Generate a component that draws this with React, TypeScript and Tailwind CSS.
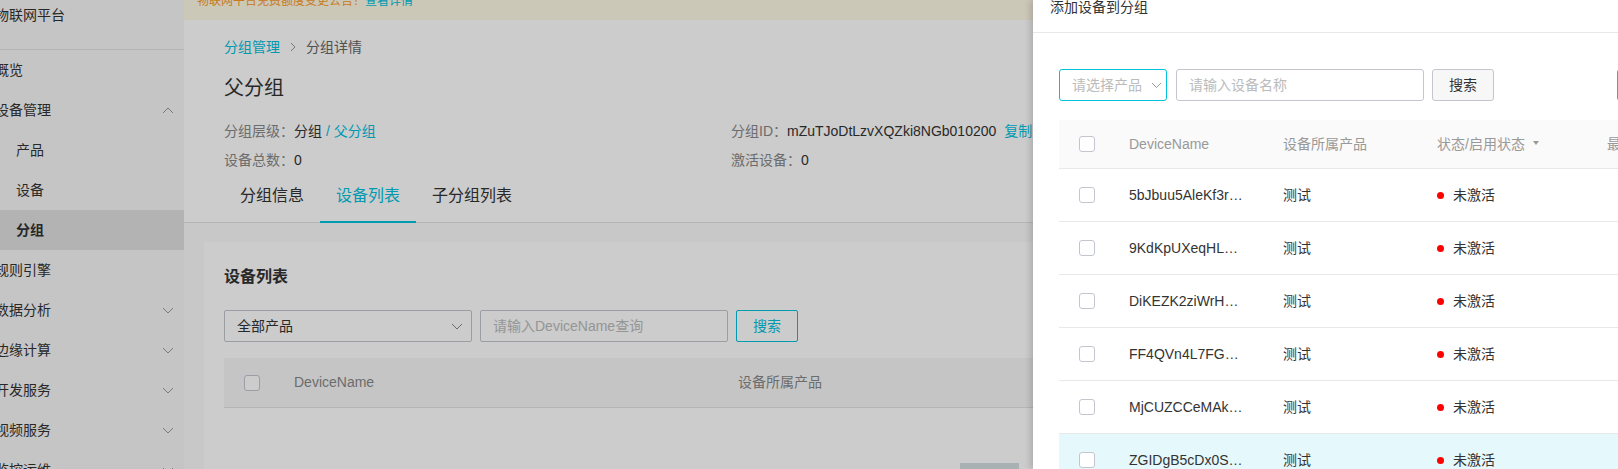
import React from "react";

const Chevron = ({ dir = "down", className = "" }: { dir?: "down" | "up" | "right"; className?: string }) => {
  const pts =
    dir === "down" ? "1,1 6,6 11,1" : dir === "up" ? "1,6 6,1 11,6" : "1,1 5,5 1,9";
  const w = dir === "right" ? 6 : 12;
  const h = dir === "right" ? 10 : 7;
  return (
    <svg width={w} height={h} viewBox={`0 0 ${w} ${h}`} className={className} fill="none">
      <polyline points={pts} stroke="currentColor" strokeWidth="1" />
    </svg>
  );
};

const Checkbox = () => (
  <span className="block w-[16px] h-[16px] rounded-[3px] border border-[#c4c6cf] bg-white" />
);

const menu = [
  { label: "概览" },
  { label: "设备管理", arrow: "up" as const, children: ["产品", "设备", "分组"] },
  { label: "规则引擎" },
  { label: "数据分析", arrow: "down" as const },
  { label: "边缘计算", arrow: "down" as const },
  { label: "开发服务", arrow: "down" as const },
  { label: "视频服务", arrow: "down" as const },
  { label: "监控运维", arrow: "down" as const },
];

const devices = [
  "5bJbuu5AleKf3r…",
  "9KdKpUXeqHL…",
  "DiKEZK2ziWrH…",
  "FF4QVn4L7FG…",
  "MjCUZCCeMAk…",
  "ZGIDgB5cDx0S…",
];

const Sidebar = () => (
  <aside className="w-[184px] shrink-0 h-full bg-[#f7f7f7] overflow-hidden text-[14px] text-[#333]">
    <div className="h-[50px] border-b border-[#e2e2e2] -ml-[5px]">
      <div className="leading-[30px] whitespace-nowrap">物联网平台</div>
    </div>
    <nav className="-ml-[5px] w-[189px]">
      {menu.map((m) => (
        <div key={m.label}>
          <div className="h-[40px] flex items-center justify-between pr-[10px]">
            <span className="whitespace-nowrap">{m.label}</span>
            {m.arrow && <Chevron dir={m.arrow} className="text-[#999]" />}
          </div>
          {m.children?.map((c) => (
            <div
              key={c}
              className={`h-[40px] flex items-center pl-[21px] ${
                c === "分组" ? "bg-[#e0e0e0] font-bold" : ""
              }`}
            >
              {c}
            </div>
          ))}
        </div>
      ))}
    </nav>
  </aside>
);

const Main = () => (
  <main className="flex-1 h-full flex flex-col overflow-hidden bg-[#fafafa] text-[14px] text-[#333]">
    <div className="h-[20px] shrink-0 bg-[#fffbe6] overflow-hidden pl-[13px]">
      <div className="text-[12px] leading-[14px] -mt-[6px] text-[#fa9a28] whitespace-nowrap">
        物联网平台免费额度变更公告！<span className="text-[#00c1de]">查看详情</span>
      </div>
    </div>

    <div className="bg-white pl-[40px]">
      <div className="mt-[17px] flex items-center leading-[20px]">
        <span className="text-[#00c1de]">分组管理</span>
        <Chevron dir="right" className="mx-[10px] text-[#999]" />
        <span className="text-[#666]">分组详情</span>
      </div>
      <h1 className="mt-[17px] text-[20px] leading-[28px] text-[#333]">父分组</h1>
      <div className="mt-[19px] grid grid-cols-[507px_1fr] gap-y-[9px] leading-[20px] whitespace-nowrap">
        <div>
          <span className="text-[#888]">分组层级：</span>分组
          <span className="text-[#00c1de]"> / 父分组</span>
        </div>
        <div>
          <span className="text-[#888]">分组ID：</span>mZuTJoDtLzvXQZki8NGb010200
          <span className="ml-[8px] text-[#00c1de]">复制</span>
        </div>
        <div>
          <span className="text-[#888]">设备总数：</span>0
        </div>
        <div>
          <span className="text-[#888]">激活设备：</span>0
        </div>
      </div>
      <div className="-ml-[40px] pl-[40px] border-b border-[#e3e3e3] flex text-[16px] leading-[20px]">
        {["分组信息", "设备列表", "子分组列表"].map((t) => (
          <div
            key={t}
            className={`px-[16px] pt-[16px] pb-[15px] border-b-2 -mb-px ${
              t === "设备列表" ? "border-[#00c1de] text-[#00c1de]" : "border-transparent"
            }`}
          >
            {t}
          </div>
        ))}
      </div>
    </div>

    <div className="flex-1 px-[20px] pt-[19px]">
      <div className="bg-white h-full px-[20px] pt-[23px]">
        <h2 className="text-[16px] font-bold leading-[24px]">设备列表</h2>
        <div className="mt-[21px] flex h-[32px]">
          <div className="w-[248px] shrink-0 border border-[#c4c6cf] rounded-[2px] flex items-center justify-between pl-[12px] pr-[8px]">
            <span>全部产品</span>
            <Chevron className="text-[#888]" />
          </div>
          <div className="ml-[8px] w-[248px] shrink-0 border border-[#c4c6cf] rounded-[2px] flex items-center pl-[12px] text-[#bbb]">
            请输入DeviceName查询
          </div>
          <div className="ml-[8px] w-[62px] shrink-0 border border-[#00c1de] rounded-[2px] flex items-center justify-center text-[#00c1de]">
            搜索
          </div>
        </div>
        <div className="mt-[16px] h-[50px] bg-[#f7f7f7] border-b border-[#e3e3e3] flex items-center text-[#888] w-[1200px]">
          <div className="w-[54px] shrink-0 pl-[20px]">
            <Checkbox />
          </div>
          <div className="w-[444px] shrink-0 px-[16px]">DeviceName</div>
          <div className="px-[16px]">设备所属产品</div>
        </div>
        <div className="mt-[55px] ml-[736px] w-[59px] h-[30px] bg-[#d3dee2]" />
      </div>
    </div>
  </main>
);

const Drawer = () => (
  <div className="absolute top-0 bottom-0 left-[1033px] w-[620px] bg-white z-20 shadow-[-3px_0_6px_rgba(0,0,0,0.15)] text-[14px] text-[#333] overflow-hidden">
    <div className="h-[33px] border-b border-[#e8e8e8] pl-[17px]">
      <div className="leading-[14px]">添加设备到分组</div>
    </div>
    <div className="pl-[26px]">
      <div className="mt-[36px] flex h-[32px]">
        <div className="w-[108px] shrink-0 border border-[#00c1de] rounded-[3px] flex items-center justify-between pl-[12px] pr-[4px] text-[#bbb] whitespace-nowrap">
          <span>请选择产品</span>
          <svg width="11" height="7" viewBox="0 0 11 7" fill="none" className="text-[#999]">
            <polyline points="1,1 5.5,5.5 10,1" stroke="currentColor" strokeWidth="1" />
          </svg>
        </div>
        <div className="ml-[9px] w-[248px] shrink-0 border border-[#c4c6cf] rounded-[3px] flex items-center pl-[12px] text-[#bbb]">
          请输入设备名称
        </div>
        <div className="ml-[8px] w-[62px] shrink-0 border border-[#c4c6cf] rounded-[3px] bg-[#f7f7f7] flex items-center justify-center">
          搜索
        </div>
        <div className="ml-[123px] w-[80px] shrink-0 border border-[#00c1de] rounded-[3px] bg-white" />
      </div>

      <div className="mt-[19px] w-[700px]">
        <div className="h-[49px] bg-[#fafafa] border-b border-[#e8e8e8] flex items-center text-[#999]">
          <div className="w-[54px] shrink-0 pl-[20px]">
            <Checkbox />
          </div>
          <div className="w-[154px] shrink-0 px-[16px]">DeviceName</div>
          <div className="w-[154px] shrink-0 px-[16px]">设备所属产品</div>
          <div className="w-[170px] shrink-0 px-[16px] flex items-center">
            状态/启用状态
            <svg width="6" height="4" viewBox="0 0 6 4" className="ml-[8px] -mt-[2px]">
              <polygon points="0,0 6,0 3,4" fill="#999" />
            </svg>
          </div>
          <div className="px-[16px] whitespace-nowrap">最近上线时间</div>
        </div>
        {devices.map((d, i) => (
          <div
            key={d}
            className={`h-[53px] border-b border-[#e8e8e8] flex items-center ${
              i === devices.length - 1 ? "bg-[#e5f8fb]" : ""
            }`}
          >
            <div className="w-[54px] shrink-0 pl-[20px]">
              <Checkbox />
            </div>
            <div className="w-[154px] shrink-0 px-[16px] truncate">{d}</div>
            <div className="w-[154px] shrink-0 px-[16px]">测试</div>
            <div className="w-[170px] shrink-0 px-[16px] flex items-center">
              <span className="w-[7px] h-[7px] rounded-full bg-[#ff0000]" />
              <span className="ml-[9px]">未激活</span>
            </div>
          </div>
        ))}
      </div>
    </div>
  </div>
);

export default function App() {
  return (
    <div className="relative w-[1618px] h-[469px] overflow-hidden flex font-['Liberation_Sans','Noto_Sans_CJK_SC',sans-serif]">
      <Sidebar />
      <Main />
      <div className="absolute inset-0 bg-black/20 z-10" />
      <Drawer />
    </div>
  );
}
